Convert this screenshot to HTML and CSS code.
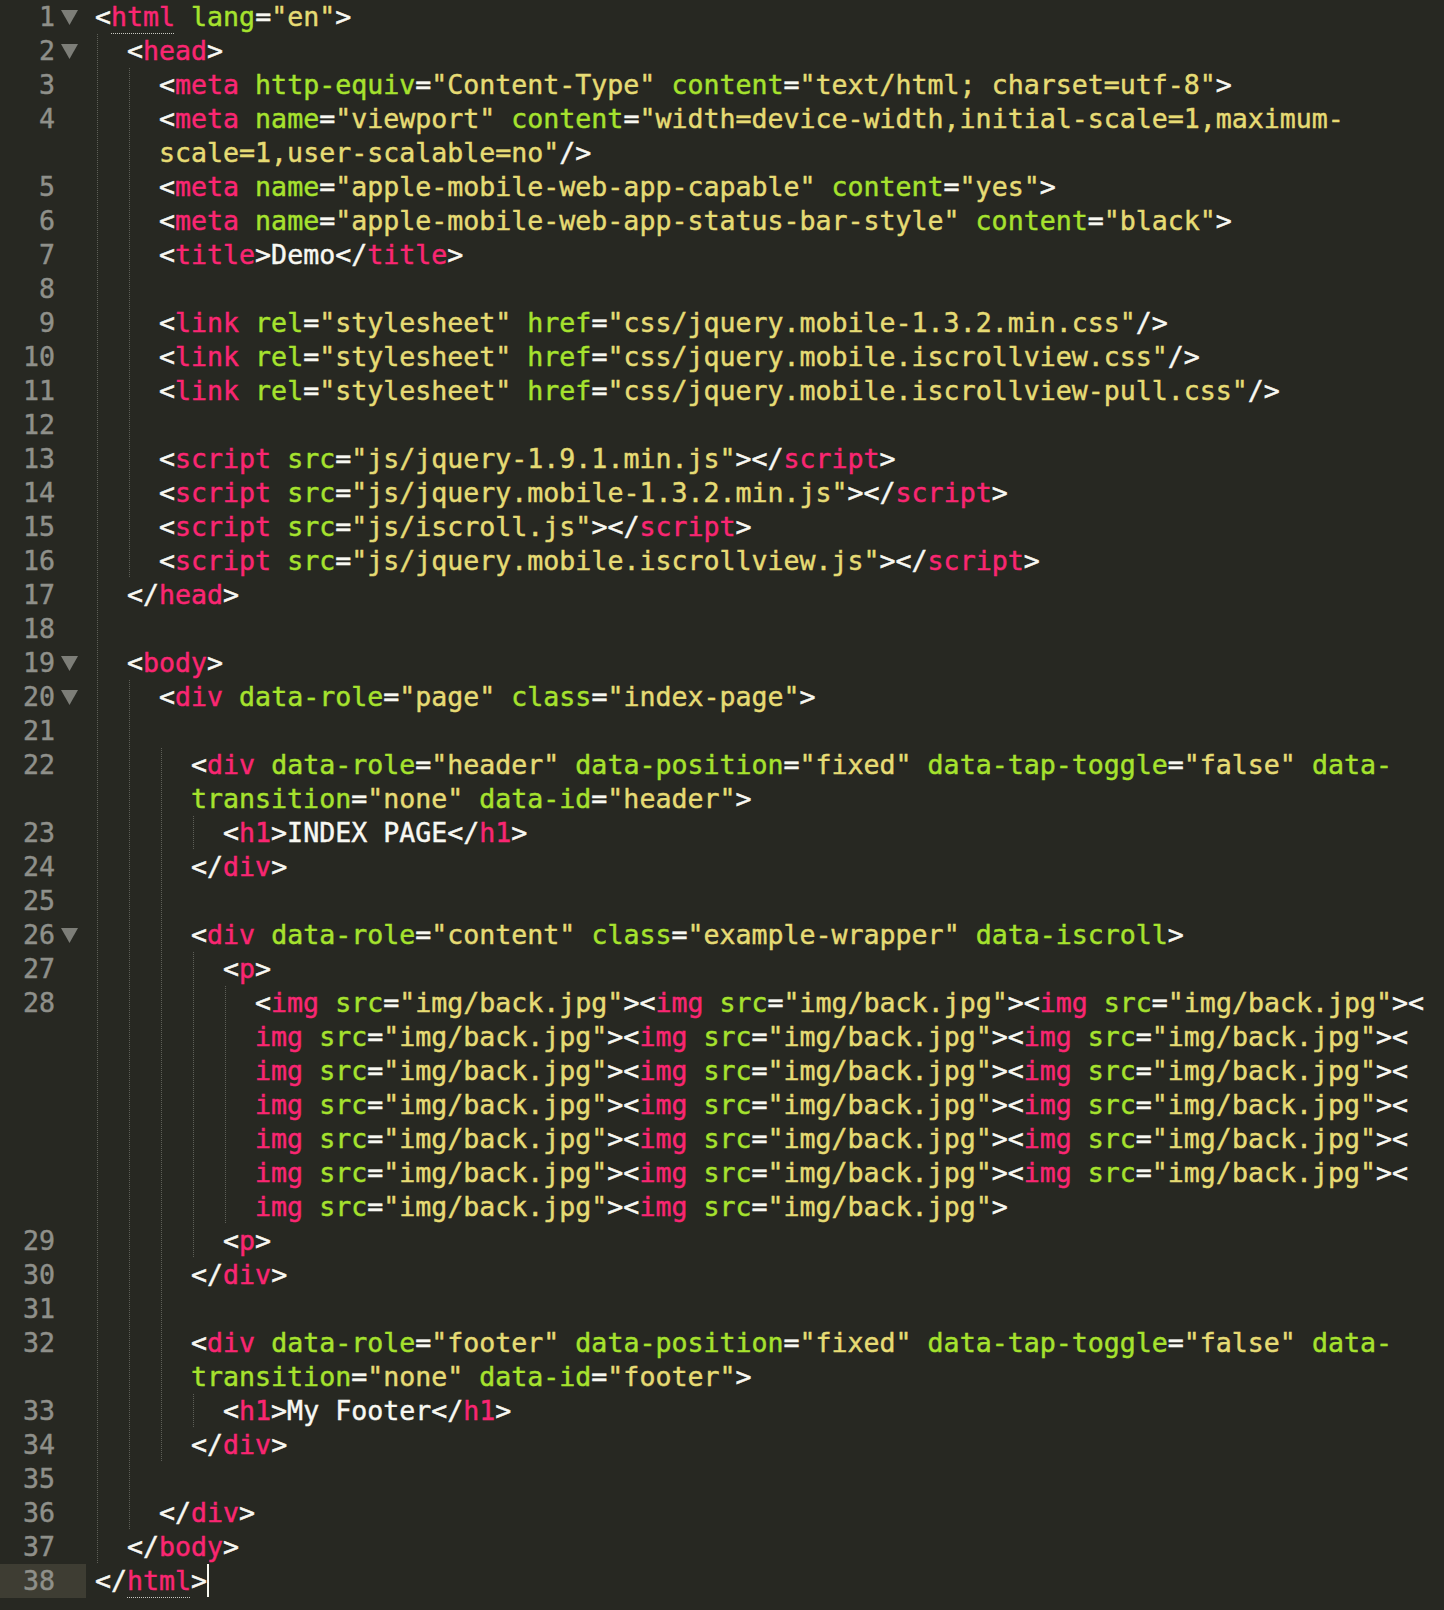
FILE: index.html
```html
<!DOCTYPE html>
<html lang="en">
<head>
<meta charset="utf-8">
<title>Demo source</title>
<link rel="stylesheet" href="styles.css">
</head>
<body>
<div class="editor">
<div class="row"><div class="gutter"><span class="ln">1</span><span class="fold"><svg width="17" height="15" viewBox="0 0 17 15"><polygon points="0,0 17,0 8.5,15"/></svg></span></div><div class="code">&lt;<span class="t m">html</span> <span class="a">lang</span>=<span class="s">"en"</span>&gt;</div></div>
<div class="row"><div class="gutter"><span class="ln">2</span><span class="fold"><svg width="17" height="15" viewBox="0 0 17 15"><polygon points="0,0 17,0 8.5,15"/></svg></span></div><div class="code"><span class="g"></span>&lt;<span class="t">head</span>&gt;</div></div>
<div class="row"><div class="gutter"><span class="ln">3</span><span class="fold"></span></div><div class="code"><span class="g"></span><span class="g"></span>&lt;<span class="t">meta</span> <span class="a">http-equiv</span>=<span class="s">"Content-Type"</span> <span class="a">content</span>=<span class="s">"text/html; charset=utf-8"</span>&gt;</div></div>
<div class="row"><div class="gutter"><span class="ln">4</span><span class="fold"></span></div><div class="code"><span class="g"></span><span class="g"></span>&lt;<span class="t">meta</span> <span class="a">name</span>=<span class="s">"viewport"</span> <span class="a">content</span>=<span class="s">"width=device-width,initial-scale=1,maximum-</span></div></div>
<div class="row"><div class="gutter"><span class="ln"></span><span class="fold"></span></div><div class="code"><span class="g"></span><span class="g"></span><span class="s">scale=1,user-scalable=no"</span>/&gt;</div></div>
<div class="row"><div class="gutter"><span class="ln">5</span><span class="fold"></span></div><div class="code"><span class="g"></span><span class="g"></span>&lt;<span class="t">meta</span> <span class="a">name</span>=<span class="s">"apple-mobile-web-app-capable"</span> <span class="a">content</span>=<span class="s">"yes"</span>&gt;</div></div>
<div class="row"><div class="gutter"><span class="ln">6</span><span class="fold"></span></div><div class="code"><span class="g"></span><span class="g"></span>&lt;<span class="t">meta</span> <span class="a">name</span>=<span class="s">"apple-mobile-web-app-status-bar-style"</span> <span class="a">content</span>=<span class="s">"black"</span>&gt;</div></div>
<div class="row"><div class="gutter"><span class="ln">7</span><span class="fold"></span></div><div class="code"><span class="g"></span><span class="g"></span>&lt;<span class="t">title</span>&gt;Demo&lt;/<span class="t">title</span>&gt;</div></div>
<div class="row"><div class="gutter"><span class="ln">8</span><span class="fold"></span></div><div class="code"><span class="g"></span><span class="g"></span></div></div>
<div class="row"><div class="gutter"><span class="ln">9</span><span class="fold"></span></div><div class="code"><span class="g"></span><span class="g"></span>&lt;<span class="t">link</span> <span class="a">rel</span>=<span class="s">"stylesheet"</span> <span class="a">href</span>=<span class="s">"css/jquery.mobile-1.3.2.min.css"</span>/&gt;</div></div>
<div class="row"><div class="gutter"><span class="ln">10</span><span class="fold"></span></div><div class="code"><span class="g"></span><span class="g"></span>&lt;<span class="t">link</span> <span class="a">rel</span>=<span class="s">"stylesheet"</span> <span class="a">href</span>=<span class="s">"css/jquery.mobile.iscrollview.css"</span>/&gt;</div></div>
<div class="row"><div class="gutter"><span class="ln">11</span><span class="fold"></span></div><div class="code"><span class="g"></span><span class="g"></span>&lt;<span class="t">link</span> <span class="a">rel</span>=<span class="s">"stylesheet"</span> <span class="a">href</span>=<span class="s">"css/jquery.mobile.iscrollview-pull.css"</span>/&gt;</div></div>
<div class="row"><div class="gutter"><span class="ln">12</span><span class="fold"></span></div><div class="code"><span class="g"></span><span class="g"></span></div></div>
<div class="row"><div class="gutter"><span class="ln">13</span><span class="fold"></span></div><div class="code"><span class="g"></span><span class="g"></span>&lt;<span class="t">script</span> <span class="a">src</span>=<span class="s">"js/jquery-1.9.1.min.js"</span>&gt;&lt;/<span class="t">script</span>&gt;</div></div>
<div class="row"><div class="gutter"><span class="ln">14</span><span class="fold"></span></div><div class="code"><span class="g"></span><span class="g"></span>&lt;<span class="t">script</span> <span class="a">src</span>=<span class="s">"js/jquery.mobile-1.3.2.min.js"</span>&gt;&lt;/<span class="t">script</span>&gt;</div></div>
<div class="row"><div class="gutter"><span class="ln">15</span><span class="fold"></span></div><div class="code"><span class="g"></span><span class="g"></span>&lt;<span class="t">script</span> <span class="a">src</span>=<span class="s">"js/iscroll.js"</span>&gt;&lt;/<span class="t">script</span>&gt;</div></div>
<div class="row"><div class="gutter"><span class="ln">16</span><span class="fold"></span></div><div class="code"><span class="g"></span><span class="g"></span>&lt;<span class="t">script</span> <span class="a">src</span>=<span class="s">"js/jquery.mobile.iscrollview.js"</span>&gt;&lt;/<span class="t">script</span>&gt;</div></div>
<div class="row"><div class="gutter"><span class="ln">17</span><span class="fold"></span></div><div class="code"><span class="g"></span>&lt;/<span class="t">head</span>&gt;</div></div>
<div class="row"><div class="gutter"><span class="ln">18</span><span class="fold"></span></div><div class="code"><span class="g"></span></div></div>
<div class="row"><div class="gutter"><span class="ln">19</span><span class="fold"><svg width="17" height="15" viewBox="0 0 17 15"><polygon points="0,0 17,0 8.5,15"/></svg></span></div><div class="code"><span class="g"></span>&lt;<span class="t">body</span>&gt;</div></div>
<div class="row"><div class="gutter"><span class="ln">20</span><span class="fold"><svg width="17" height="15" viewBox="0 0 17 15"><polygon points="0,0 17,0 8.5,15"/></svg></span></div><div class="code"><span class="g"></span><span class="g"></span>&lt;<span class="t">div</span> <span class="a">data-role</span>=<span class="s">"page"</span> <span class="a">class</span>=<span class="s">"index-page"</span>&gt;</div></div>
<div class="row"><div class="gutter"><span class="ln">21</span><span class="fold"></span></div><div class="code"><span class="g"></span><span class="g"></span></div></div>
<div class="row"><div class="gutter"><span class="ln">22</span><span class="fold"></span></div><div class="code"><span class="g"></span><span class="g"></span><span class="g"></span>&lt;<span class="t">div</span> <span class="a">data-role</span>=<span class="s">"header"</span> <span class="a">data-position</span>=<span class="s">"fixed"</span> <span class="a">data-tap-toggle</span>=<span class="s">"false"</span> <span class="a">data-</span></div></div>
<div class="row"><div class="gutter"><span class="ln"></span><span class="fold"></span></div><div class="code"><span class="g"></span><span class="g"></span><span class="g"></span><span class="a">transition</span>=<span class="s">"none"</span> <span class="a">data-id</span>=<span class="s">"header"</span>&gt;</div></div>
<div class="row"><div class="gutter"><span class="ln">23</span><span class="fold"></span></div><div class="code"><span class="g"></span><span class="g"></span><span class="g"></span><span class="g"></span>&lt;<span class="t">h1</span>&gt;INDEX PAGE&lt;/<span class="t">h1</span>&gt;</div></div>
<div class="row"><div class="gutter"><span class="ln">24</span><span class="fold"></span></div><div class="code"><span class="g"></span><span class="g"></span><span class="g"></span>&lt;/<span class="t">div</span>&gt;</div></div>
<div class="row"><div class="gutter"><span class="ln">25</span><span class="fold"></span></div><div class="code"><span class="g"></span><span class="g"></span><span class="g"></span></div></div>
<div class="row"><div class="gutter"><span class="ln">26</span><span class="fold"><svg width="17" height="15" viewBox="0 0 17 15"><polygon points="0,0 17,0 8.5,15"/></svg></span></div><div class="code"><span class="g"></span><span class="g"></span><span class="g"></span>&lt;<span class="t">div</span> <span class="a">data-role</span>=<span class="s">"content"</span> <span class="a">class</span>=<span class="s">"example-wrapper"</span> <span class="a">data-iscroll</span>&gt;</div></div>
<div class="row"><div class="gutter"><span class="ln">27</span><span class="fold"></span></div><div class="code"><span class="g"></span><span class="g"></span><span class="g"></span><span class="g"></span>&lt;<span class="t">p</span>&gt;</div></div>
<div class="row"><div class="gutter"><span class="ln">28</span><span class="fold"></span></div><div class="code"><span class="g"></span><span class="g"></span><span class="g"></span><span class="g"></span><span class="g"></span>&lt;<span class="t">img</span> <span class="a">src</span>=<span class="s">"img/back.jpg"</span>&gt;&lt;<span class="t">img</span> <span class="a">src</span>=<span class="s">"img/back.jpg"</span>&gt;&lt;<span class="t">img</span> <span class="a">src</span>=<span class="s">"img/back.jpg"</span>&gt;&lt;</div></div>
<div class="row"><div class="gutter"><span class="ln"></span><span class="fold"></span></div><div class="code"><span class="g"></span><span class="g"></span><span class="g"></span><span class="g"></span><span class="g"></span><span class="t">img</span> <span class="a">src</span>=<span class="s">"img/back.jpg"</span>&gt;&lt;<span class="t">img</span> <span class="a">src</span>=<span class="s">"img/back.jpg"</span>&gt;&lt;<span class="t">img</span> <span class="a">src</span>=<span class="s">"img/back.jpg"</span>&gt;&lt;</div></div>
<div class="row"><div class="gutter"><span class="ln"></span><span class="fold"></span></div><div class="code"><span class="g"></span><span class="g"></span><span class="g"></span><span class="g"></span><span class="g"></span><span class="t">img</span> <span class="a">src</span>=<span class="s">"img/back.jpg"</span>&gt;&lt;<span class="t">img</span> <span class="a">src</span>=<span class="s">"img/back.jpg"</span>&gt;&lt;<span class="t">img</span> <span class="a">src</span>=<span class="s">"img/back.jpg"</span>&gt;&lt;</div></div>
<div class="row"><div class="gutter"><span class="ln"></span><span class="fold"></span></div><div class="code"><span class="g"></span><span class="g"></span><span class="g"></span><span class="g"></span><span class="g"></span><span class="t">img</span> <span class="a">src</span>=<span class="s">"img/back.jpg"</span>&gt;&lt;<span class="t">img</span> <span class="a">src</span>=<span class="s">"img/back.jpg"</span>&gt;&lt;<span class="t">img</span> <span class="a">src</span>=<span class="s">"img/back.jpg"</span>&gt;&lt;</div></div>
<div class="row"><div class="gutter"><span class="ln"></span><span class="fold"></span></div><div class="code"><span class="g"></span><span class="g"></span><span class="g"></span><span class="g"></span><span class="g"></span><span class="t">img</span> <span class="a">src</span>=<span class="s">"img/back.jpg"</span>&gt;&lt;<span class="t">img</span> <span class="a">src</span>=<span class="s">"img/back.jpg"</span>&gt;&lt;<span class="t">img</span> <span class="a">src</span>=<span class="s">"img/back.jpg"</span>&gt;&lt;</div></div>
<div class="row"><div class="gutter"><span class="ln"></span><span class="fold"></span></div><div class="code"><span class="g"></span><span class="g"></span><span class="g"></span><span class="g"></span><span class="g"></span><span class="t">img</span> <span class="a">src</span>=<span class="s">"img/back.jpg"</span>&gt;&lt;<span class="t">img</span> <span class="a">src</span>=<span class="s">"img/back.jpg"</span>&gt;&lt;<span class="t">img</span> <span class="a">src</span>=<span class="s">"img/back.jpg"</span>&gt;&lt;</div></div>
<div class="row"><div class="gutter"><span class="ln"></span><span class="fold"></span></div><div class="code"><span class="g"></span><span class="g"></span><span class="g"></span><span class="g"></span><span class="g"></span><span class="t">img</span> <span class="a">src</span>=<span class="s">"img/back.jpg"</span>&gt;&lt;<span class="t">img</span> <span class="a">src</span>=<span class="s">"img/back.jpg"</span>&gt;</div></div>
<div class="row"><div class="gutter"><span class="ln">29</span><span class="fold"></span></div><div class="code"><span class="g"></span><span class="g"></span><span class="g"></span><span class="g"></span>&lt;<span class="t">p</span>&gt;</div></div>
<div class="row"><div class="gutter"><span class="ln">30</span><span class="fold"></span></div><div class="code"><span class="g"></span><span class="g"></span><span class="g"></span>&lt;/<span class="t">div</span>&gt;</div></div>
<div class="row"><div class="gutter"><span class="ln">31</span><span class="fold"></span></div><div class="code"><span class="g"></span><span class="g"></span><span class="g"></span></div></div>
<div class="row"><div class="gutter"><span class="ln">32</span><span class="fold"></span></div><div class="code"><span class="g"></span><span class="g"></span><span class="g"></span>&lt;<span class="t">div</span> <span class="a">data-role</span>=<span class="s">"footer"</span> <span class="a">data-position</span>=<span class="s">"fixed"</span> <span class="a">data-tap-toggle</span>=<span class="s">"false"</span> <span class="a">data-</span></div></div>
<div class="row"><div class="gutter"><span class="ln"></span><span class="fold"></span></div><div class="code"><span class="g"></span><span class="g"></span><span class="g"></span><span class="a">transition</span>=<span class="s">"none"</span> <span class="a">data-id</span>=<span class="s">"footer"</span>&gt;</div></div>
<div class="row"><div class="gutter"><span class="ln">33</span><span class="fold"></span></div><div class="code"><span class="g"></span><span class="g"></span><span class="g"></span><span class="g"></span>&lt;<span class="t">h1</span>&gt;My Footer&lt;/<span class="t">h1</span>&gt;</div></div>
<div class="row"><div class="gutter"><span class="ln">34</span><span class="fold"></span></div><div class="code"><span class="g"></span><span class="g"></span><span class="g"></span>&lt;/<span class="t">div</span>&gt;</div></div>
<div class="row"><div class="gutter"><span class="ln">35</span><span class="fold"></span></div><div class="code"><span class="g"></span><span class="g"></span></div></div>
<div class="row"><div class="gutter"><span class="ln">36</span><span class="fold"></span></div><div class="code"><span class="g"></span><span class="g"></span>&lt;/<span class="t">div</span>&gt;</div></div>
<div class="row"><div class="gutter"><span class="ln">37</span><span class="fold"></span></div><div class="code"><span class="g"></span>&lt;/<span class="t">body</span>&gt;</div></div>
<div class="row current"><div class="gutter"><span class="ln">38</span><span class="fold"></span></div><div class="code">&lt;/<span class="t m">html</span>&gt;<span class="caret"></span></div></div>
</div>
</body>
</html>
```
FILE: styles.css
```css
html, body {
  margin: 0;
  padding: 0;
  background: #272822;
}

body {
  width: 1444px;
  height: 1610px;
  overflow: hidden;
}

.editor {
  font-family: "DejaVu Sans Mono", "Liberation Mono", monospace;
  font-size: 26.6px;
  color: #f8f8f2;
  -webkit-text-stroke: 0.45px currentColor;
}

.row {
  display: flex;
  height: 34px;
  line-height: 34px;
}

.gutter {
  width: 86px;
  flex: none;
  display: flex;
  align-items: center;
}

.current .gutter {
  background: #3e3d33;
}

.ln {
  width: 55px;
  text-align: right;
  color: #8f908a;
}

.fold {
  display: flex;
  align-items: center;
  padding-left: 6px;
  height: 34px;
}

.fold svg {
  display: block;
  margin-top: 1px;
  fill: #7d7e78;
}

.code {
  padding-left: 9px;
  white-space: pre;
}

.g {
  display: inline-block;
  width: 2ch;
  height: 34px;
  vertical-align: top;
  background-image: repeating-linear-gradient(to bottom, #5e5f58 0 1px, transparent 1px 2px);
  background-size: 1px 100%;
  background-position: 2px 0;
  background-repeat: no-repeat;
}

.t { color: #f92672; }
.a { color: #a6e22e; }
.s { color: #e6db74; }

.m {
  position: relative;
}

.m::after {
  content: "";
  position: absolute;
  left: 0;
  right: 0;
  bottom: -2px;
  height: 1px;
  background-image: repeating-linear-gradient(to right, #c8c8c2 0 1px, transparent 1px 2px);
}

.caret {
  display: inline-block;
  width: 2px;
  height: 33px;
  vertical-align: top;
  background: #f8f8f0;
}
```
